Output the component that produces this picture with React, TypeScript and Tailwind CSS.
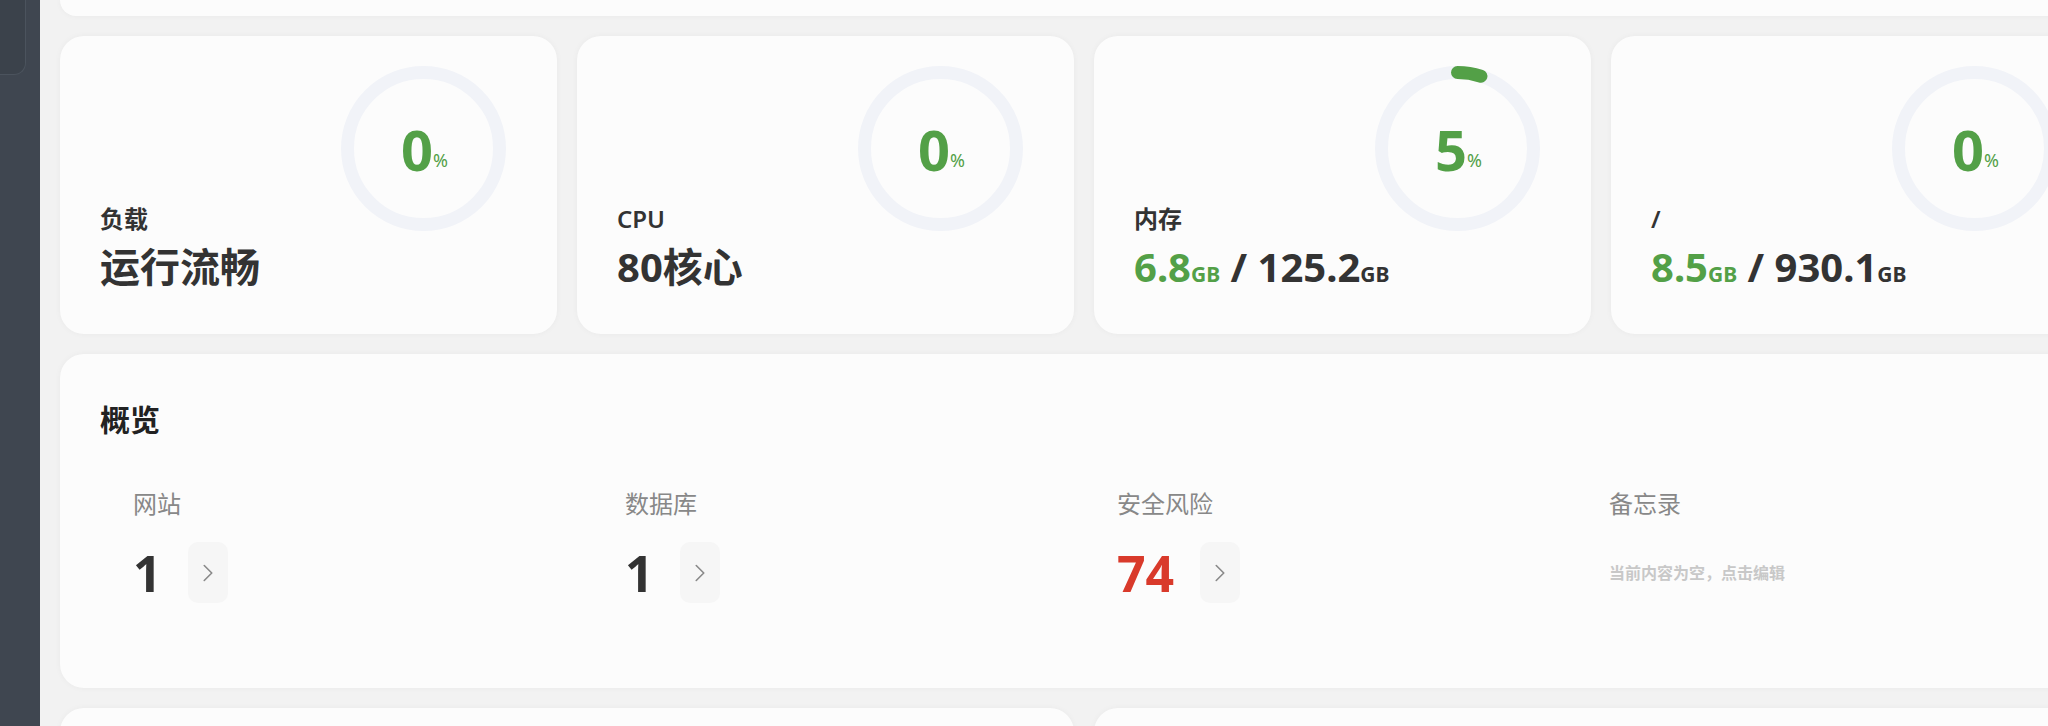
import { ChevronRight } from 'lucide-react';

const GREEN = 'text-[#53a047]';

type Stat = {
    label: string;
    percent: number;
    value: React.ReactNode;
};

function Ring({ percent }: { percent: number }) {
    const r = 76;
    const c = 2 * Math.PI * r;
    const len = (c * percent) / 100;
    return (
        <div className="relative h-[165px] w-[165px] shrink-0">
            <svg width="165" height="165" viewBox="0 0 165 165" className="-rotate-90">
                <circle cx="82.5" cy="82.5" r={r} fill="none" stroke="#f1f3f8" strokeWidth="13" />
                {percent > 0 && (
                    <circle
                        cx="82.5"
                        cy="82.5"
                        r={r}
                        fill="none"
                        stroke="#53a047"
                        strokeWidth="13"
                        strokeLinecap="round"
                        strokeDasharray={`${len} ${c}`}
                    />
                )}
            </svg>
            <div className="absolute inset-0 flex items-center justify-center pl-[2px]">
                <span className={`text-[56px] font-bold leading-none ${GREEN}`}>{percent}</span>
                <span className={`mt-[22px] text-[18px] leading-none ${GREEN}`}>%</span>
            </div>
        </div>
    );
}

function Size({ used, total }: { used: string; total: string }) {
    return (
        <>
            <span className={GREEN}>{used}</span>
            <span className={`text-[21px] leading-none ${GREEN}`}>GB</span>
            <span> / {total}</span>
            <span className="text-[21px] leading-none">GB</span>
        </>
    );
}

const stats: Stat[] = [
    { label: '负载', percent: 0, value: '运行流畅' },
    { label: 'CPU', percent: 0, value: '80核心' },
    { label: '内存', percent: 5, value: <Size used="6.8" total="125.2" /> },
    { label: '/', percent: 0, value: <Size used="8.5" total="930.1" /> },
];

const overview = [
    { label: '网站', count: '1', color: 'text-[#333]' },
    { label: '数据库', count: '1', color: 'text-[#333]' },
    { label: '安全风险', count: '74', color: 'text-[#d93a2b]' },
];

export default function App() {
    return (
        <div
            className="flex h-[726px] w-[2048px] overflow-hidden bg-[#f2f2f2]"
            style={{ fontFamily: '"Noto Sans", "Noto Sans CJK SC", sans-serif' }}
        >
            <aside className="w-[40px] shrink-0 bg-[#3f4650]">
                <div className="h-[75px] w-[26px] rounded-br-[12px] border-r border-b border-[#4b535d] bg-[#3b424b]" />
            </aside>

            <main className="min-w-0 flex-1 overflow-hidden">
                <div className="flex w-[2088px] flex-col gap-5 px-5">
                    <div className="h-[16px] rounded-b-[24px] bg-[#fcfcfc] shadow-[0_0_6px_rgba(0,0,0,0.04)]" />

                    <div className="grid grid-cols-4 gap-5">
                        {stats.map((s) => (
                            <div
                                key={s.label}
                                className="flex h-[298px] rounded-[24px] bg-[#fcfcfc] pt-[30px] pr-[51px] pb-[43px] pl-[40px] shadow-[0_0_6px_rgba(0,0,0,0.04)]"
                            >
                                <div className="flex min-w-0 flex-1 flex-col justify-end gap-2 whitespace-nowrap">
                                    <div className="h-[32px] text-[24px] font-semibold leading-[32px] text-[#333]">{s.label}</div>
                                    <div className="h-[48px] text-[40px] font-bold leading-[48px] text-[#333]">{s.value}</div>
                                </div>
                                <Ring percent={s.percent} />
                            </div>
                        ))}
                    </div>

                    <div className="h-[334px] rounded-[24px] bg-[#fcfcfc] px-10 pt-[46px] shadow-[0_0_6px_rgba(0,0,0,0.04)]">
                        <h2 className="text-[30px] font-bold leading-[40px] text-[#222]">概览</h2>
                        <div className="mt-[48px] grid grid-cols-4">
                            {overview.map((o) => (
                                <div key={o.label} className="pl-[33px]">
                                    <div className="text-[24px] leading-[32px] text-[#888]">{o.label}</div>
                                    <div className="mt-[22px] flex h-[61px] items-center">
                                        <span className={`text-[50px] font-bold leading-none ${o.color}`}>{o.count}</span>
                                        <button className="ml-[26px] flex h-[61px] w-[40px] items-center justify-center rounded-[10px] bg-[#f6f6f6] text-[#8a8a8a]">
                                            <ChevronRight size={30} strokeWidth={1.3} />
                                        </button>
                                    </div>
                                </div>
                            ))}
                            <div className="pl-[33px]">
                                <div className="text-[24px] leading-[32px] text-[#888]">备忘录</div>
                                <div className="mt-[22px] flex h-[61px] items-center text-[16px] font-semibold text-[#c8c8c8]">
                                    当前内容为空，点击编辑
                                </div>
                            </div>
                        </div>
                    </div>

                    <div className="grid grid-cols-2 gap-5">
                        <div className="h-[300px] rounded-[24px] bg-[#fcfcfc] shadow-[0_0_6px_rgba(0,0,0,0.04)]" />
                        <div className="h-[300px] rounded-[24px] bg-[#fcfcfc] shadow-[0_0_6px_rgba(0,0,0,0.04)]" />
                    </div>
                </div>
            </main>
        </div>
    );
}
